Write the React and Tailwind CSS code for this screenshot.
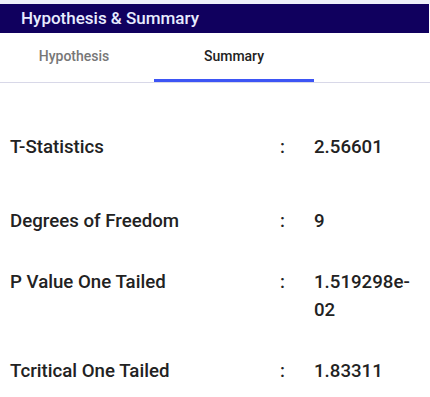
import { useState } from 'react'

const rows = [
  { label: 'T-Statistics', value: '2.56601' },
  { label: 'Degrees of Freedom', value: '9' },
  { label: 'P Value One Tailed', value: '1.519298e-02' },
  { label: 'Tcritical One Tailed', value: '1.83311' },
]

export default function App() {
  const [tab, setTab] = useState('summary')

  return (
    <div className="w-[430px] h-[397px] bg-white overflow-hidden font-['Roboto',sans-serif]">
      <div className="h-[4px] bg-[#eef0f8]" />
      <div className="h-[29px] bg-[#10005e] flex items-center pl-[21px] mr-[1px]">
        <span className="text-[#e8ecff] text-[17px] font-medium">Hypothesis &amp; Summary</span>
      </div>

      <div className="flex border-b border-[#d8d8e8] h-[50px]">
        {[['hypothesis', 'Hypothesis'], ['summary', 'Summary']].map(([key, name]) => (
          <button
            key={key}
            onClick={() => setTab(key)}
            className={`w-[160px] ${key === 'hypothesis' ? 'ml-[-6px]' : ''} flex items-center justify-center text-[14px] font-medium border-b-[3px] ${
              tab === key ? 'text-[#222] border-[#3d55f5]' : 'text-[#777] border-transparent'
            }`}
          >
            {name}
          </button>
        ))}
      </div>

      <div className="pt-[50px] pl-[10px] flex flex-col gap-[33px] text-[18.67px] font-medium text-[#222] leading-[28px]">
        {rows.map((r, i) => (
          <div key={r.label} className={`flex ${i === 0 ? 'mb-[13px]' : ''}`}>
            <div className="w-[270px]">{r.label}</div>
            <div className="w-[34px]">:</div>
            <div className="w-[106px]">{r.value}</div>
          </div>
        ))}
      </div>
    </div>
  )
}
